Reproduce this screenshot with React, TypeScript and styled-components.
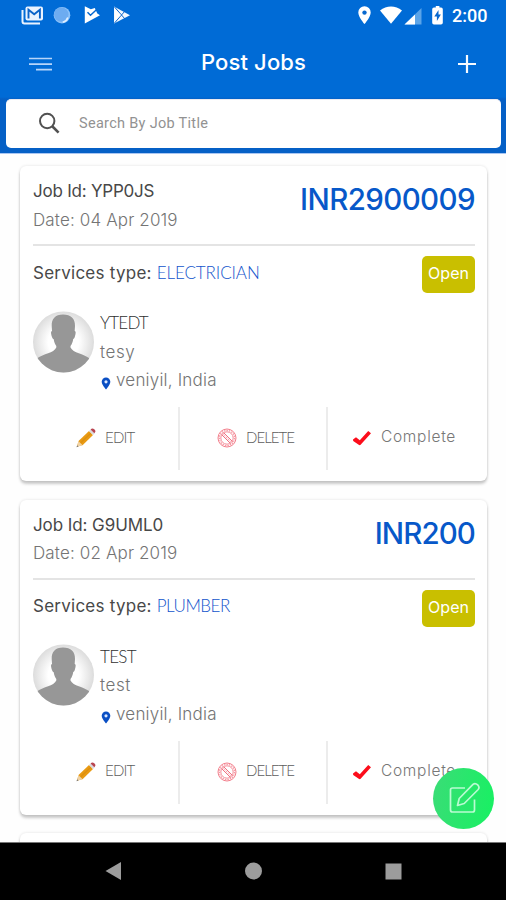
import React from 'react';
import styled, { createGlobalStyle } from 'styled-components';

const Global = createGlobalStyle`
  * { box-sizing: border-box; }
  html, body { margin: 0; padding: 0; background: #fefefe; overflow: hidden; }
  svg { display: block; flex: none; }
`;

const Screen = styled.main`
  position: relative;
  width: 506px;
  height: 900px;
  display: flex;
  flex-direction: column;
  overflow: hidden;
  background: #fefefe;
  font-family: Inter, 'Open Sans', sans-serif;
`;

const Header = styled.header`
  flex: none;
  height: 154px;
  background: linear-gradient(#006bd6 0 97px, #0560c6 99px, #0560c6 100%);
  border-bottom: 1px solid #a9c6f2;
`;

const StatusBar = styled.div`
  height: 32px;
  display: flex;
  justify-content: space-between;
  padding: 0 18px 0 21px;
`;

const Clock = styled.span`
  font: 500 18px/32px Roboto, sans-serif;
  color: #fff;
  width: 36px;
  white-space: nowrap;
`;

const AppBar = styled.div`
  height: 67px;
  display: grid;
  grid-template-columns: 60px 1fr 60px;
  padding: 0 9px 0 10px;
`;

const Title = styled.h1`
  margin: 0;
  padding-top: 12px;
  text-align: center;
  font-size: 22px;
  line-height: 36px;
  font-weight: 500;
  letter-spacing: 0.15px;
  color: #fff;
`;

const IconSlot = styled.div<{ $top: number; $left: number }>`
  padding: ${p => p.$top}px 0 0 ${p => p.$left}px;
`;

const Search = styled.div`
  height: 49px;
  margin: 0 5px 0 6px;
  display: flex;
  align-items: center;
  padding-left: 31px;
  gap: 16px;
  border-radius: 5px;
  background: #fff;
  border-top: 1px solid #eceaf0;
  font: 400 14.5px/20px Roboto, sans-serif;
  color: #929292;
  letter-spacing: 0.3px;
`;

const List = styled.section`
  flex: 1;
  min-height: 0;
  overflow: hidden;
  padding: 12px 19px 0 20px;
`;

const Card = styled.article`
  height: 315px;
  margin-bottom: 18.5px;
  padding: 11px 12px 0 13px;
  border-radius: 6px;
  background: #fff;
  box-shadow: 0 3px 3px rgba(0, 0, 0, 0.2), 0 0 3px rgba(0, 0, 0, 0.12);
`;

const Summary = styled.div`
  height: 69px;
  display: flex;
  justify-content: space-between;
  border-bottom: 2px solid #e4e4e4;
`;

const Line = styled.div<{ $tone?: 'dark' | 'name' | 'soft'; $track?: number }>`
  height: 28.5px;
  line-height: 28.5px;
  font-size: 17px;
  white-space: nowrap;
  font-weight: ${p => (p.$tone === 'dark' ? 400 : 300)};
  font-family: ${p => (p.$tone === 'name' ? 'Lato, sans-serif' : 'inherit')};
  color: ${p => (p.$tone === 'dark' ? '#484848' : p.$tone === 'name' ? '#303030' : '#747474')};
  letter-spacing: ${p => p.$track ?? 0}px;
`;

const Price = styled.div<{ $track: number }>`
  font-size: 29.5px;
  line-height: 45px;
  font-weight: 500;
  color: #0758c9;
  letter-spacing: ${p => p.$track}px;
`;

const ServiceRow = styled.div`
  height: 54px;
  display: flex;
  align-items: center;
  justify-content: space-between;
`;

const Service = styled.span<{ $track: number }>`
  margin-left: 5px;
  font-family: Lato, sans-serif;
  font-weight: 300;
  color: #1254cb;
  letter-spacing: ${p => p.$track}px;
`;

const Badge = styled.span`
  width: 53px;
  height: 37px;
  margin-top: 3px;
  border-radius: 5px;
  background: #c9bf00;
  color: #fff;
  text-align: center;
  font-size: 16px;
  line-height: 34px;
`;

const Person = styled.div`
  height: 107px;
  display: flex;
  gap: 6px;
  padding-top: 9px;
  & > svg { margin-top: 1.5px; }
`;

const Place = styled.div`
  display: flex;
  gap: 5px;
  & > svg { margin-top: 11px; }
`;

const Actions = styled.div`
  display: grid;
  grid-template-columns: 160px 148px 1fr;
  height: 63px;
  margin: 0 -12px 0 -13px;
`;

const Action = styled.div<{ $pad: number; $gap: number; $track: number; $caps?: boolean }>`
  display: flex;
  align-items: center;
  padding-left: ${p => p.$pad}px;
  padding-bottom: 4px;
  gap: ${p => p.$gap}px;
  border-right: 2px solid #ececec;
  font-family: ${p => (p.$caps ? 'Lato, sans-serif' : 'inherit')};
  font-size: ${p => (p.$caps ? 15 : 15.5)}px;
  font-weight: 300;
  color: ${p => (p.$caps ? '#5c5c5c' : '#777')};
  letter-spacing: ${p => p.$track}px;
  &:last-child { border-right: 0; }
  & > svg { margin-top: 3px; }
`;

const Fab = styled.button`
  position: absolute;
  left: 433px;
  top: 768px;
  width: 61px;
  height: 61px;
  padding: 0;
  border: 0;
  border-radius: 50%;
  display: grid;
  place-items: center;
  background: linear-gradient(100deg, #3bdc77, #17f162);
`;

const NavBar = styled.nav`
  flex: none;
  height: 58px;
  background: #000;
  border-top: 1px solid #777;
`;

const NotificationIcons = () => (
  <svg width="114" height="32" viewBox="21 0 114 32">
    <path d="M22.5 10v11.5q0 2 2 2H40" fill="none" stroke="#eaf3ff" strokeWidth="2" />
    <rect x="25.5" y="6.5" width="17.5" height="14" rx="2" fill="#eaf3ff" />
    <path d="M28.5 18.5V9.8l5.7 4.4 5.7-4.4v8.7" fill="none" stroke="#0b63c8" strokeWidth="1.9" />
    <circle cx="62" cy="15.2" r="8.3" fill="#8cc2fa" />
    <circle cx="61.3" cy="14.6" r="7.2" fill="#6dacf1" />
    <path d="M67.8 17.5a7 7 0 0 1-5 4.8" fill="none" stroke="#e0efff" strokeWidth="1.6" />
    <path d="M84.8 6.3l6 3 4-1.3 2.500 5.500 2.700 1.700L84.800 23.500z" fill="#fff" />
    <path d="M87.5 12.2l3 3 7.500-6.900" fill="none" stroke="#0768cf" strokeWidth="1.500" />
    <path d="M114 6.5l16 8.7-16 8.3z" fill="#f2f8ff" />
    <path d="M114.5 7l10.5 12M114.5 23l10.5-12" fill="none" stroke="#0b65cb" strokeWidth="1" />
    <path d="M114.8 9v12l6-6z" fill="#fff" />
  </svg>
);

const SystemIcons = () => (
  <svg width="94" height="32" viewBox="357 0 94 32">
    <path d="M365.5 6.2a6.2 6.2 0 0 0-6.2 6.2c0 4.5 6.2 11.6 6.2 11.6s6.2-7.1 6.2-11.6a6.2 6.2 0 0 0-6.2-6.2z" fill="#fff" />
    <circle cx="365.5" cy="12.6" r="2.2" fill="#0768cf" />
    <path d="M381 10.5c6.5-5.3 15.5-5.3 22 0L392 23.8z" fill="#fff" />
    <path d="M422.5 8v16.5h-17z" fill="#5ba4e8" />
    <path d="M416 14.5v10h-10.5z" fill="#fff" />
    <path d="M435 7.5h1.8V6h3.6v1.5h1.6q1.8 0 1.8 1.8v13.5q0 1.8-1.8 1.8h-7q-1.8 0-1.8-1.8V9.3q0-1.8 1.8-1.8z" fill="#fff" />
    <path d="M439.5 10l-4.2 6.6h2.6V21l4-6.5h-2.4z" fill="#0768cf" />
  </svg>
);

const StatusRight = styled.div`
  display: flex;
  gap: 2.5px;
`;

const MenuIcon = () => (
  <svg width="24" height="14" viewBox="0 0 24 14">
    <path d="M0 1.5h23M0 7.2h23M7 12.7h16" stroke="#b7d5fa" strokeWidth="1.7" />
  </svg>
);

const PlusIcon = () => (
  <svg width="20" height="20" viewBox="0 0 20 20">
    <path d="M10 1v18M1 10h18" stroke="#f6faff" strokeWidth="2.2" />
  </svg>
);

const SearchIcon = () => (
  <svg width="26" height="24" viewBox="0 0 26 24">
    <circle cx="10.2" cy="9" r="7.2" fill="none" stroke="#515151" strokeWidth="2" />
    <path d="M15 14l6.600 6.600" stroke="#515151" strokeWidth="2.600" />
  </svg>
);

const Avatar = () => (
  <svg width="61" height="62" viewBox="0 0 61 62">
    <defs>
      <radialGradient id="halo">
        <stop offset="0.5" stopColor="#fff" />
        <stop offset="1" stopColor="#dcdcdc" />
      </radialGradient>
      <clipPath id="round"><circle cx="30.5" cy="31" r="30.5" /></clipPath>
    </defs>
    <g clipPath="url(#round)">
      <rect width="61" height="62" fill="url(#halo)" />
      <path d="M30 3.5C22 3.5 18.5 8 18.7 15l.3 5c-1.5.3-1 3 0 6 .5 1.5 1 2 1.6 2 .5 3.500 1.700 5.500 2.700 7v1.500C21 42 10 43 4.500 47L0 62h61l-5-15c-5-4-16-5-18.500-10.500V35c1.300-1.700 2.300-3.700 2.700-7 .8 0 1.300-1 1.700-2.500 1-3.500 1.200-5.300-.2-5.500l.3-5C42 7.500 38 3.500 30 3.500z" fill="#979797" />
    </g>
  </svg>
);

const PinIcon = () => (
  <svg width="11" height="13" viewBox="0 0 11 13">
    <path d="M6 .5a4.3 4.3 0 0 0-4.3 4.3C1.7 8 6 12.500 6 12.500S10.300 8 10.300 4.800A4.300 4.300 0 0 0 6 .5z" fill="#0a4fc4" />
    <circle cx="6" cy="4.8" r="1.6" fill="#dbe8ff" />
  </svg>
);

const PencilIcon = () => (
  <svg width="20" height="20" viewBox="0 0 20 20">
    <path d="M.8 18.8l2-6L13 3l4 4L6.8 17z" fill="#e99a12" />
    <path d="M4.8 14.8L15 5" stroke="#db8f10" strokeWidth="1.2" />
    <path d="M.8 18.8l1.7-5.5 4.2 4z" fill="#efd2a5" />
    <path d="M.5 19.2l.7-2 1.3 1.2z" fill="#777" />
    <path d="M13 3l1.6-1.6 4 4L17 7z" fill="#d9d9dd" />
    <path d="M14.6 1.5q1.3-1.3 2.8-.7 2.4 1 2 3l-1.100 1.500z" fill="#b94450" />
  </svg>
);

const BanIcon = () => (
  <svg width="20" height="20" viewBox="0 0 20 20" fill="none">
    <circle cx="10" cy="10" r="9" stroke="#f37f8c" strokeWidth="1" />
    <circle cx="10" cy="10" r="7.6" stroke="#f59aa5" strokeWidth="1.2" strokeDasharray="1.5 1" />
    <circle cx="10" cy="10" r="6.2" stroke="#f37f8c" strokeWidth="0.9" />
    <path d="M4.6 6.5l9 9M6.5 4.6l9 9" stroke="#ef6476" strokeWidth="1" />
    <path d="M5.5 5.5l9 9" stroke="#f5a5ae" strokeWidth="1" strokeDasharray="1.5 1" />
  </svg>
);

const CheckIcon = () => (
  <svg width="20" height="16" viewBox="0 0 20 16">
    <path d="M1 9.5L4 7.2l3.800 3L16.200 1 19 3.200 8.600 14.800Q7.700 15.500 6.700 14.700L1.200 11z" fill="#fc0d1b" />
  </svg>
);

const ComposeIcon = () => (
  <svg width="34" height="34" viewBox="0 0 34 34" fill="none" stroke="#b9fbd2" strokeWidth="1.7" strokeLinejoin="round">
    <path d="M18 6H5.500q-2 0-2 2v20q0 2 2 2h20q2 0 2-2V17.500" />
    <path d="M10.500 23.500l1.700-7L26 2.300q2.200-1.800 4.700.5 2.300 2.500.5 4.700l-14 14z" />
  </svg>
);

const NavIcons = () => (
  <svg width="506" height="57" viewBox="0 843 506 57" fill="#9c9c9c">
    <path d="M105.5 871l15.5-9v18z" />
    <circle cx="253.5" cy="871" r="8.5" />
    <rect x="385.5" y="863.5" width="16" height="16" />
  </svg>
);

interface Job {
  id: string; date: string; price: string; service: string; name: string; note: string;
  idTrack: number; priceTrack: number; serviceTrack: number; nameTrack: number;
}

const jobs: Job[] = [
  { id: 'YPP0JS', date: '04 Apr 2019', price: 'INR2900009', service: 'ELECTRICIAN', name: 'YTEDT', note: 'tesy',
    idTrack: -0.22, priceTrack: -0.6, serviceTrack: -0.1, nameTrack: -0.8 },
  { id: 'G9UML0', date: '02 Apr 2019', price: 'INR200', service: 'PLUMBER', name: 'TEST', note: 'test',
    idTrack: -0.08, priceTrack: -0.9, serviceTrack: -0.5, nameTrack: -0.7 },
];

const JobCard = ({ job }: { job: Job }) => (
  <Card>
    <Summary>
      <div>
        <Line $tone="dark" $track={job.idTrack}>Job Id: {job.id}</Line>
        <Line $track={0.14}>Date: {job.date}</Line>
      </div>
      <Price $track={job.priceTrack}>{job.price}</Price>
    </Summary>
    <ServiceRow>
      <Line $tone="dark" $track={0.25}>
        Services type:<Service $track={job.serviceTrack}>{job.service}</Service>
      </Line>
      <Badge>Open</Badge>
    </ServiceRow>
    <Person>
      <Avatar />
      <div>
        <Line $tone="name" $track={job.nameTrack}>{job.name}</Line>
        <Line $track={0.6}>{job.note}</Line>
        <Place><PinIcon /><Line $track={0.2}>veniyil, India</Line></Place>
      </div>
    </Person>
    <Actions>
      <Action $caps $pad={56} $gap={9} $track={-0.8}><PencilIcon />EDIT</Action>
      <Action $caps $pad={37} $gap={9} $track={-0.95}><BanIcon />DELETE</Action>
      <Action $pad={24} $gap={9} $track={0.7}><CheckIcon />Complete</Action>
    </Actions>
  </Card>
);

export default function App() {
  return (
    <Screen>
      <Global />
      <Header>
        <StatusBar>
          <NotificationIcons />
          <StatusRight><SystemIcons /><Clock>2:00</Clock></StatusRight>
        </StatusBar>
        <AppBar>
          <IconSlot $top={25} $left={19}><MenuIcon /></IconSlot>
          <Title>Post Jobs</Title>
          <IconSlot $top={22} $left={20}><PlusIcon /></IconSlot>
        </AppBar>
        <Search><SearchIcon />Search By Job Title</Search>
      </Header>
      <List>
        {jobs.map(job => <JobCard key={job.id} job={job} />)}
        <Card />
      </List>
      <NavBar><NavIcons /></NavBar>
      <Fab aria-label="Compose"><ComposeIcon /></Fab>
    </Screen>
  );
}
